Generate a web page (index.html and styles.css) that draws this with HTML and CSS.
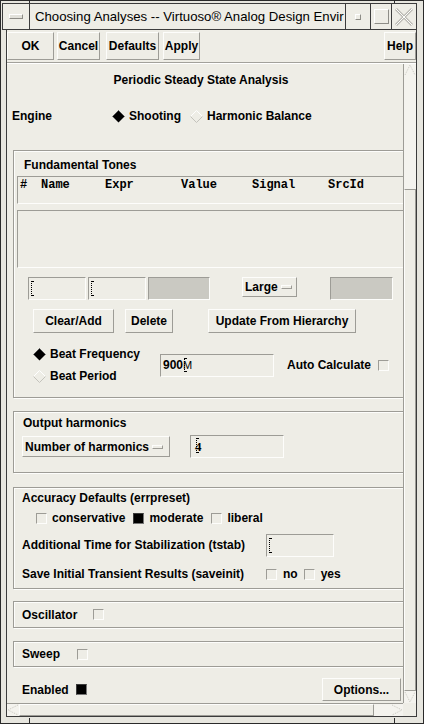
FILE: index.html
```html
<!DOCTYPE html>
<html>
<head>
<meta charset="utf-8">
<link rel="stylesheet" href="styles.css">
</head>
<body>
<div class="win">
  <div class="titlebar">
    <div class="tb-menu"><span class="menubar"></span></div>
    <div class="tb-title">Choosing Analyses -- Virtuoso® Analog Design Envir</div>
    <div class="tb-btn tb-min"><span class="mini"></span></div>
    <div class="tb-btn tb-max"><span class="maxi"></span></div>
    <div class="tb-btn tb-close">
      <svg width="20" height="20" viewBox="0 0 20 20"><path d="M2 2 L18 18 M18 2 L2 18" stroke="#b9b8b2" stroke-width="3" fill="none"/><path d="M2 2 L18 18 M18 2 L2 18" stroke="#fdfdfb" stroke-width="1" fill="none"/></svg>
    </div>
  </div>
  <div class="client">
    <div class="toolbar">
      <div class="btn tbtn w-ok">OK</div>
      <div class="btn tbtn w-cancel">Cancel</div>
      <div class="btn tbtn w-def">Defaults</div>
      <div class="btn tbtn w-apply">Apply</div>
      <div class="spacer"></div>
      <div class="btn tbtn w-help">Help</div>
    </div>
    <div class="sw">
      <div class="viewport">
        <div class="content">
          <div class="heading">Periodic Steady State Analysis</div>
          <div class="engine-row">
            <span class="lbl-engine">Engine</span>
            <span class="radio on"><svg width="13" height="13" viewBox="0 0 13 13"><polygon points="6.5,0.5 12.5,6.5 6.5,12.5 0.5,6.5" fill="#000"/><polyline points="0.5,6.5 6.5,0.5 12.5,6.5" fill="none" stroke="#555" stroke-width="1"/></svg></span>
            <span class="rtext">Shooting</span>
            <span class="radio off gap9"><svg width="13" height="13" viewBox="0 0 13 13"><polyline points="0.5,6.5 6.5,0.5 12.5,6.5" fill="none" stroke="#fff" stroke-width="1"/><polyline points="0.5,6.5 6.5,12.5 12.5,6.5" fill="none" stroke="#c4c3bc" stroke-width="1"/></svg></span>
            <span class="rtext">Harmonic Balance</span>
          </div>

          <div class="frame f1">
            <div class="ftitle ft1">Fundamental Tones</div>
            <div class="thead">
              <span>#</span><span>Name</span><span>Expr</span><span>Value</span><span>Signal</span><span>SrcId</span>
            </div>
            <div class="tbody"></div>
            <div class="input-row">
              <div class="field f-a"><span class="ibeam"></span></div>
              <div class="field f-b"><span class="ibeam"></span></div>
              <div class="field disabled f-c"></div>
              <div class="btn opt f-large">Large <span class="optbar"></span></div>
              <div class="field disabled f-d"></div>
            </div>
            <div class="btn-row">
              <div class="btn b-clear">Clear/Add</div>
              <div class="btn b-del">Delete</div>
              <div class="btn b-upd">Update From Hierarchy</div>
            </div>
            <div class="beat-row">
              <div class="beat-col">
                <div class="radio-line">
                  <span class="radio on"><svg width="13" height="13" viewBox="0 0 13 13"><polygon points="6.5,0.5 12.5,6.5 6.5,12.5 0.5,6.5" fill="#000"/><polyline points="0.5,6.5 6.5,0.5 12.5,6.5" fill="none" stroke="#555" stroke-width="1"/></svg></span>
                  <span class="rtext">Beat Frequency</span>
                </div>
                <div class="radio-line">
                  <span class="radio off"><svg width="13" height="13" viewBox="0 0 13 13"><polyline points="0.5,6.5 6.5,0.5 12.5,6.5" fill="none" stroke="#fff" stroke-width="1"/><polyline points="0.5,6.5 6.5,12.5 12.5,6.5" fill="none" stroke="#c4c3bc" stroke-width="1"/></svg></span>
                  <span class="rtext">Beat Period</span>
                </div>
              </div>
              <div class="field f-beat"><span class="val">900<span class="mchar">M</span><span class="ibeam over"></span></span></div>
              <span class="lbl-auto">Auto Calculate</span>
              <span class="cb"></span>
            </div>
          </div>

          <div class="frame f2">
            <div class="ftitle ft2">Output harmonics</div>
            <div class="harm-row">
              <div class="btn opt f-num">Number of harmonics <span class="optbar"></span></div>
              <div class="field f-harm"><span class="val four">4<span class="ibeam over4"></span></span></div>
            </div>
          </div>

          <div class="frame f3">
            <div class="ftitle ft3">Accuracy Defaults (errpreset)</div>
            <div class="acc-row">
              <span class="cb"></span><span class="cbl">conservative</span>
              <span class="cb filled"></span><span class="cbl">moderate</span>
              <span class="cb"></span><span class="cbl">liberal</span>
            </div>
            <div class="tstab-row">
              <span class="lbl-tstab">Additional Time for Stabilization (tstab)</span>
              <div class="field f-tstab"><span class="ibeam"></span></div>
            </div>
            <div class="save-row">
              <span class="lbl-save">Save Initial Transient Results (saveinit)</span>
              <span class="cb"></span><span class="cbl">no</span>
              <span class="cb"></span><span class="cbl">yes</span>
            </div>
          </div>

          <div class="frame f4">
            <span class="lbl-osc">Oscillator</span><span class="cb"></span>
          </div>

          <div class="frame f5">
            <span class="lbl-sweep">Sweep</span><span class="cb"></span>
          </div>

          <div class="enabled-row">
            <span class="lbl-en">Enabled</span><span class="cb filled"></span>
            <div class="spacer"></div>
            <div class="btn b-opts">Options...</div>
          </div>
        </div>
      </div>
      <div class="vscroll">
        <div class="arrow up"><svg width="12" height="12" viewBox="0 0 12 12"><polyline points="1,11 6,1 11,11" fill="none" stroke="#c9c8c1" stroke-width="1" stroke-dasharray="1 1"/></svg></div>
        <div class="vtrough-top"></div>
        <div class="vthumb"></div>
        <div class="arrow down"><svg width="12" height="12" viewBox="0 0 12 12"><polyline points="1,1 6,11 11,1" fill="none" stroke="#c9c8c1" stroke-width="1" stroke-dasharray="1 1"/></svg></div>
      </div>
      <div class="hscroll">
        <div class="arrow left"><svg width="12" height="12" viewBox="0 0 12 12"><polyline points="11,1 1,6 11,11" fill="none" stroke="#c9c8c1" stroke-width="1" stroke-dasharray="1 1"/></svg></div>
        <div class="hthumb"></div>
        <div class="htrough-right"></div>
        <div class="arrow right"><svg width="12" height="12" viewBox="0 0 12 12"><polyline points="1,1 11,6 1,11" fill="none" stroke="#c9c8c1" stroke-width="1" stroke-dasharray="1 1"/></svg></div>
      </div>
      <div class="corner"></div>
    </div>
  </div>
  <span class="mark mk-tl-h"></span>
  <span class="mark mk-tr-h"></span>
  <span class="mark mk-bl-h"></span>
  <span class="mark mk-br-h"></span>
</div>
</body>
</html>
```

FILE: styles.css
```css
* { box-sizing: border-box; margin: 0; padding: 0; }
html, body { width: 424px; height: 724px; overflow: hidden; }
body {
  background: #eeede6;
  font: bold 12px "Liberation Sans", Arial, sans-serif;
  color: #000;
}

.win {
  width: 424px;
  height: 724px;
  border: 1px solid #2a2a2a;
  background: #e7e6df;
  display: flex;
  flex-direction: column;
  position: relative;
  padding: 2px 1px 0 1px;
}

/* ---------- title bar ---------- */
.titlebar {
  height: 27px;
  display: flex;
  border: 1px solid #3c3c3c;
  background: #eeede6;
  margin-right: 5px;
}
.tb-menu {
  width: 27px;
  border-right: 1px solid #3c3c3c;
  display: flex;
  align-items: center;
  justify-content: center;
}
.menubar {
  width: 14px;
  height: 5px;
  border: 1px solid;
  border-color: #fff #8e8d87 #8e8d87 #fff;
  background: #e2e1da;
}
.tb-title {
  flex: 1;
  font: 13.2px "Liberation Sans", Arial, sans-serif;
  line-height: 25px;
  padding-left: 5px;
  white-space: nowrap;
  overflow: hidden;
  border-right: 1px solid #3c3c3c;
}
.tb-btn {
  display: flex;
  align-items: center;
  justify-content: center;
  border-right: 1px solid #3c3c3c;
}
.tb-min { width: 25px; }
.tb-max { width: 21px; }
.tb-close { width: 24px; border-right: none; }
.mini {
  width: 6px; height: 6px;
  border: 1px solid; border-color: #fff #8e8d87 #8e8d87 #fff;
}
.maxi {
  width: 15px; height: 15px;
  border: 1px solid; border-color: #fff #8e8d87 #8e8d87 #fff;
}

/* ---------- client ---------- */
.client {
  flex: 1;
  display: flex;
  flex-direction: column;
  margin: 0 5px 6px 4px;
  border-left: 1px solid #3c3c3c;
  border-right: 1px solid #3c3c3c;
  border-bottom: 1px solid #3c3c3c;
  background: #eeede6;
  min-height: 0;
}
.toolbar {
  height: 33px;
  display: flex;
  align-items: flex-start;
  padding: 2px 0 0 0;
  border-bottom: 1px solid #a2a19b;
  box-shadow: 0 1px 0 #fff;
}
.spacer { flex: 1; }

.btn {
  display: flex;
  align-items: center;
  justify-content: center;
  border: 1px solid;
  border-color: #fdfdfb #9d9c96 #9d9c96 #fdfdfb;
  background: #eeede6;
  white-space: nowrap;
}
.tbtn { height: 28px; }
.w-ok { width: 47px; margin-left: 0; }
.w-cancel { width: 43px; margin-left: 3px; }
.w-def { width: 53px; margin-left: 6px; }
.w-apply { width: 37px; margin-left: 4px; }
.w-help { width: 32px; margin-right: 0; }

/* ---------- scrolled window ---------- */
.sw {
  flex: 1;
  min-height: 0;
  margin-top: 1px;
  display: grid;
  grid-template-columns: 1fr 13px;
  grid-template-rows: 1fr 13px;
}
.viewport {
  overflow: hidden;
  position: relative;
}
.content {
  width: 430px;
  display: flex;
  flex-direction: column;
}

.heading {
  height: 32px;
  line-height: 32px;
  width: 388px;
  text-align: center;
}
.engine-row {
  height: 40px;
  display: flex;
  align-items: center;
  padding-left: 5px;
}
.lbl-engine { width: 100px; }
.radio { display: inline-flex; width: 13px; height: 13px; }
.rtext { margin-left: 4px; }
.gap9 { margin-left: 9px; }

.frame {
  border: 1px solid #9d9c96;
  box-shadow: inset 1px 1px 0 #fdfdfb, 1px 1px 0 #fdfdfb;
  margin-left: 6px;
  width: 410px;
}
.f1 { margin-top: 14px; height: 248px; padding: 0 0 0 2px; display: flex; flex-direction: column; }
.ftitle { line-height: 20px; }
.ft1 { height: 25px; padding: 4px 0 0 8px; line-height: 20px; }

.thead {
  height: 28px;
  margin-left: 1px;
  border: 1px solid;
  border-color: #9d9c96 #fdfdfb #fdfdfb #9d9c96;
  display: grid;
  grid-template-columns: 21px 64px 76px 71px 76px auto;
  padding: 1px 0 0 2px;
  font: bold 12px "Liberation Mono", "Courier New", monospace;
  line-height: 14px;
  align-content: start;
}
.tbody {
  height: 58px;
  margin: 6px 0 0 1px;
  border: 1px solid;
  border-color: #9d9c96 #fdfdfb #fdfdfb #9d9c96;
}
.input-row {
  height: 23px;
  margin-top: 9px;
  display: flex;
  align-items: flex-start;
}
.field {
  height: 23px;
  border: 1px solid;
  border-color: #9d9c96 #fdfdfb #fdfdfb #9d9c96;
  display: flex;
  align-items: center;
  padding-left: 2px;
}
.field.disabled { background: #cac9c2; }
.f-a { width: 58px; margin-left: 12px; }
.f-b { width: 58px; margin-left: 2px; }
.f-c { width: 62px; margin-left: 2px; }
.f-large { width: 55px; height: 20px; margin-left: 32px; padding-left: 2px; justify-content: flex-start; }
.f-d { width: 63px; margin-left: 33px; }
.ibeam {
  display: inline-block;
  width: 3px;
  height: 15px;
  border-left: 1px dotted #000;
  border-top: 1px solid #000;
  border-bottom: 1px solid #000;
}
.optbar {
  display: inline-block;
  width: 11px;
  height: 4px;
  margin-left: 3px;
  border: 1px solid;
  border-color: #fdfdfb #9d9c96 #9d9c96 #fdfdfb;
  vertical-align: middle;
}

.btn-row {
  height: 24px;
  margin-top: 9px;
  display: flex;
}
.b-clear { width: 81px; margin-left: 17px; }
.b-del { width: 48px; margin-left: 11px; }
.b-upd { width: 148px; margin-left: 35px; }

.beat-row {
  margin-top: 10px;
  display: flex;
  align-items: center;
}
.beat-col { display: flex; flex-direction: column; margin-left: 17px; width: 127px; }
.radio-line { height: 22px; display: flex; align-items: center; }
.f-beat { width: 114px; padding-left: 2px; }
.val { position: relative; display: inline-block; }
.mchar { font-weight: normal; font-size: 11px; }
.ibeam.over { position: absolute; left: 21px; top: 0; height: 14px; }
.ibeam.over4 { position: absolute; left: 1px; top: -1px; height: 15px; }
.lbl-auto { margin-left: 13px; }
.cb {
  display: inline-block;
  width: 11px;
  height: 11px;
  border: 1px solid;
  border-color: #9d9c96 #fdfdfb #fdfdfb #9d9c96;
  flex: none;
}
.cb.filled { background: #000; border-color: #3a3a3a #777 #777 #3a3a3a; }
.beat-row .cb { margin-left: 7px; }

.f2 { margin-top: 13px; height: 62px; padding: 0 0 0 2px; }
.ft2 { padding: 1px 0 0 7px; }
.harm-row { display: flex; align-items: center; margin-top: 2px; height: 23px; }
.f-num { width: 148px; height: 21px; margin-left: 6px; justify-content: flex-start; padding-left: 2px; }
.f-harm { width: 94px; margin-left: 20px; padding-left: 4px; }
.four { font: bold 13px "Liberation Serif", serif; }

.f3 { margin-top: 14px; height: 102px; padding: 0 0 0 8px; display: flex; flex-direction: column; }
.ft3 { line-height: 20px; height: 20px; }
.acc-row { display: flex; align-items: center; height: 20px; padding-left: 14px; }
.cbl { margin-left: 5px; margin-right: 8px; }
.tstab-row { display: flex; align-items: center; height: 30px; margin-top: 2px; }
.lbl-tstab { width: 244px; }
.f-tstab { width: 68px; }
.save-row { display: flex; align-items: center; height: 26px; margin-top: 1px; }
.lbl-save { width: 244px; }
.save-row .cbl { margin-left: 6px; margin-right: 6px; }

.f4 { margin-top: 12px; height: 27px; display: flex; align-items: center; padding-left: 8px; }
.lbl-osc { width: 71px; }
.f5 { margin-top: 13px; height: 26px; display: flex; align-items: center; padding-left: 8px; }
.lbl-sweep { width: 55px; }

.enabled-row {
  margin-top: 11px;
  height: 23px;
  display: flex;
  align-items: center;
  padding-left: 15px;
  width: 396px;
}
.lbl-en { width: 54px; }
.b-opts { width: 79px; height: 23px; margin-right: 2px; }

/* scrollbars */
.vscroll {
  display: flex;
  flex-direction: column;
  border-left: 1px solid #9d9c96;
  background: #f4f3ee;
}
.arrow { width: 12px; height: 12px; flex: none; display: flex; }
.vtrough-top { height: 113px; }
.vthumb {
  flex: 1;
  border: 1px solid;
  border-color: #9d9c96 #9d9c96 #9d9c96 #fdfdfb;
  background: #eeede6;
}
.hscroll {
  display: flex;
  border-top: 1px solid #9d9c96;
  background: #f4f3ee;
}
.hthumb {
  width: 355px;
  border: 1px solid;
  border-color: #fdfdfb #9d9c96 #9d9c96 #fdfdfb;
  background: #eeede6;
}
.htrough-right { flex: 1; }
.corner { background: #eeede6; }

/* frame corner marks */
.mark { position: absolute; background: #2a2a2a; }
.mk-tl-h { left: 28px; top: -1px; width: 1px; height: 3px; }
.mk-tr-h { left: 393px; top: -1px; width: 1px; height: 3px; }
.mk-bl-h { left: 28px; bottom: -1px; width: 1px; height: 6px; }
.mk-br-h { left: 393px; bottom: -1px; width: 1px; height: 6px; }
```
